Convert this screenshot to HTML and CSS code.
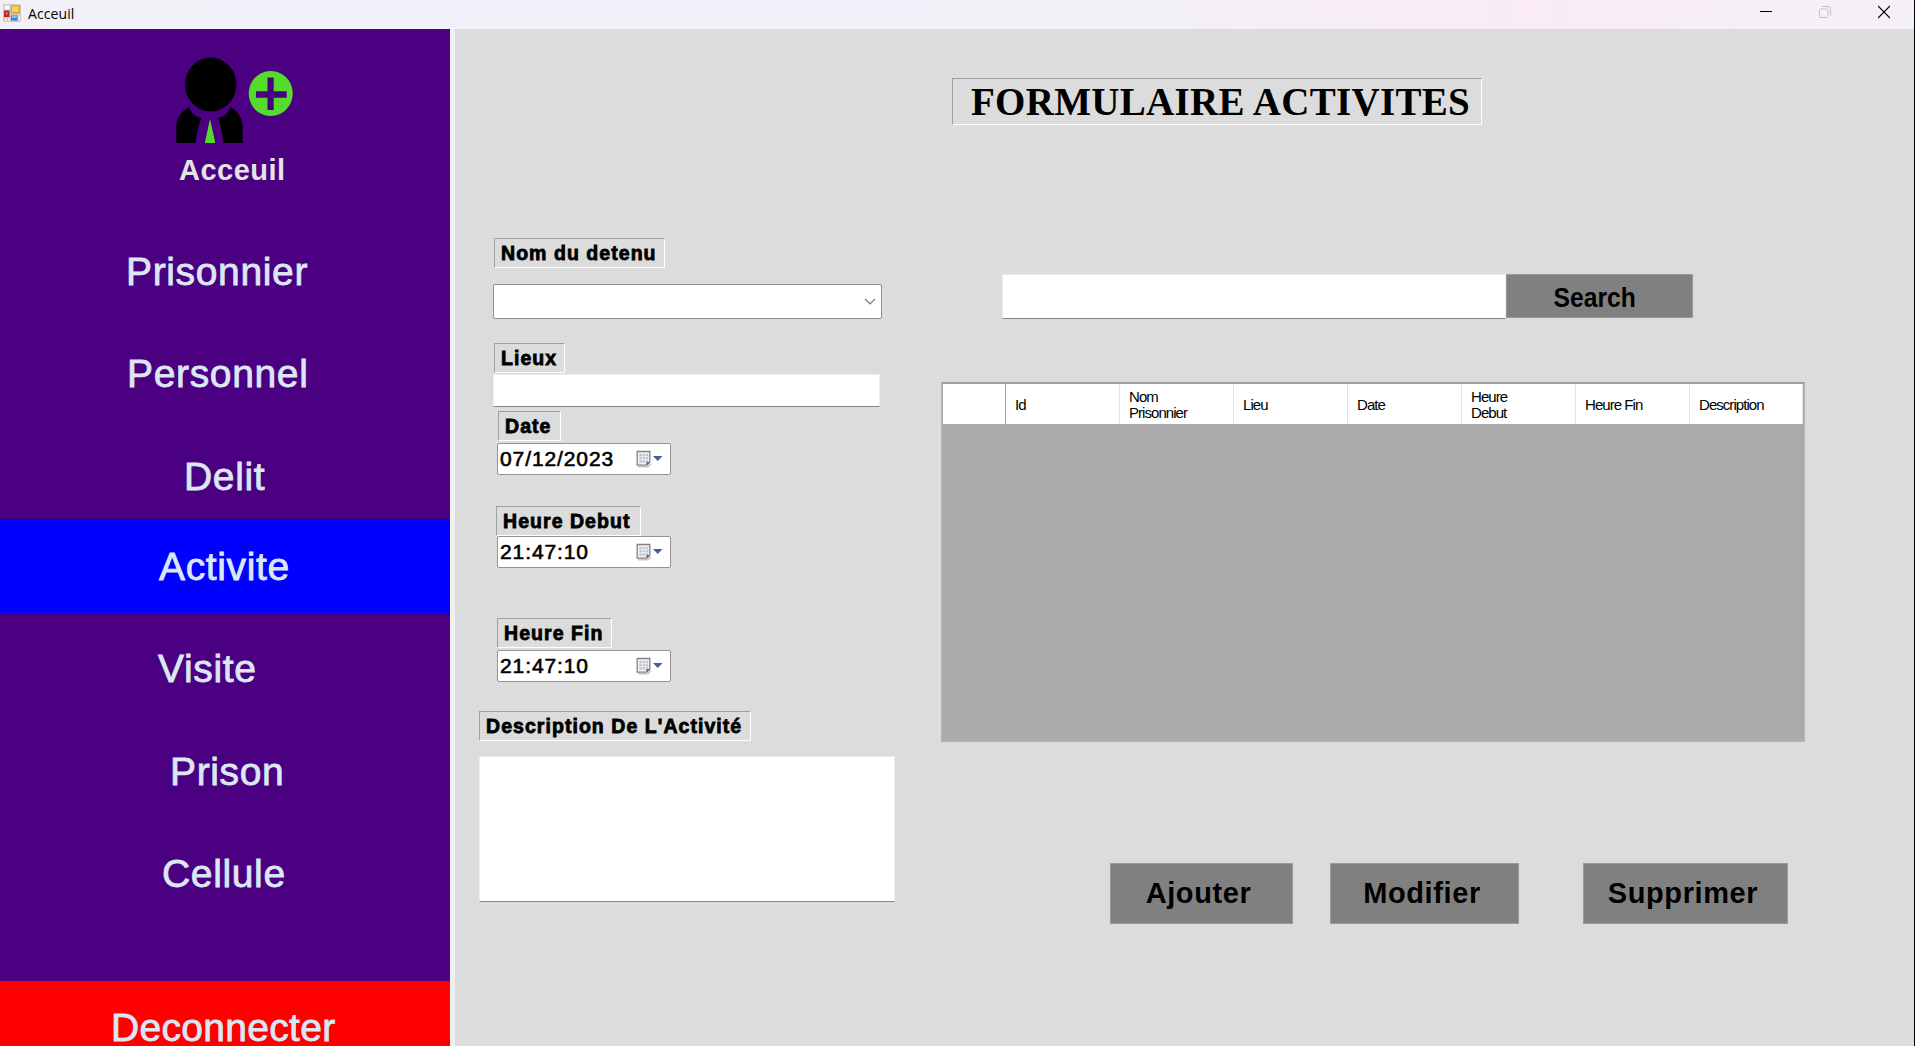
FILE: index.html
```html
<!DOCTYPE html>
<html lang="fr">
<head>
<meta charset="utf-8">
<title>Acceuil</title>
<link rel="stylesheet" href="styles.css">
</head>
<body>
<svg width="0" height="0" class="defs">
  <symbol id="calendar" viewBox="0 0 27 18">
    <path d="M2 16.700h10l3-3" stroke="#c9c6c6" stroke-width="1.500" fill="none"/>
    <path d="M1.200 1.500h12.600v10.700l-3 3h-9.600z" fill="#eef0f3" stroke="#8b8080" stroke-width="1.300"/>
    <path d="M3.500 4h8.500v8.500h-8.500z" fill="#b9c3d2"/>
    <path d="M3.500 6.700h8.500M3.500 9.700h8.500M6.200 4v8.500M9.200 4v8.500" stroke="#f7f9fb" stroke-width=".8"/>
    <path d="M10.500 15.500v-3.500h3.500z" fill="#6d6464"/>
    <path d="M17 6h9.500l-4.750 5z" fill="#465f92"/>
  </symbol>
</svg>
<header class="titlebar">
  <svg class="app-icon" width="18" height="18" viewBox="0 0 18 18">
    <rect width="18" height="18" rx="1" fill="#c9c9ce"/>
    <rect x="1.500" y="1.500" width="5" height="4" fill="#f7f7f9"/>
    <rect x="1" y="6.500" width="5.500" height="6.500" fill="#b72c22"/>
    <rect x="3" y="8.500" width="1.500" height="2" fill="#ee9b8c"/>
    <rect x="8" y="1.500" width="9" height="8" fill="#e0a413"/>
    <rect x="9" y="2.500" width="6.500" height="5.500" fill="#fbd55a"/>
    <rect x="8" y="11.500" width="6.500" height="5" fill="#3f7fdc"/>
    <rect x="9" y="12" width="4.500" height="2" fill="#8fbcf5"/>
    <path d="M2 14h1.500v3H2zM5 14h1.500v3H5zM15.500 11.500h1.500v5h-1.500z" fill="#f4f4f6"/>
  </svg>
  <span class="window-title">Acceuil</span>
  <div class="window-controls">
    <svg width="12" height="14" viewBox="0 0 12 14"><path d="M0 6.500h12" stroke="#000"/></svg>
    <svg width="12" height="14" viewBox="0 0 12 14" fill="none" stroke="#c3bec5"><rect x=".5" y="4" width="8.500" height="8.500" rx="1.500"/><path d="M3 1.500h6q2.500 0 2.500 2.500v6.500"/></svg>
    <svg width="12" height="14" viewBox="0 0 12 14"><path d="M0 1l12 12M12 1L0 13" stroke="#000" stroke-width="1.200"/></svg>
  </div>
</header>
<div class="window">
  <nav class="sidebar">
    <div class="brand">
      <svg width="118" height="87" viewBox="0 0 118 87">
        <ellipse cx="34.700" cy="27.500" rx="25.700" ry="27"/>
        <path d="M13 50Q16 59 25.500 61Q21 72 19.500 86H.3V68Q1 57 13 50z"/>
        <path d="M54.500 50Q51 59 42 61Q46 72 47.500 86H66.500V68Q66 57 54.500 50z"/>
        <path d="M34 62L39.300 86H28.800z" fill="#54dc2c"/>
        <path fill-rule="evenodd" fill="#54dc2c" d="M94.700 14a22 22.500 0 1 0 .01 0zM91.500 20.500h6.200v13.700H110.700v6.500H97.700V53H91.500V40.700H80v-6.500H91.500z"/>
      </svg>
      <span class="brand-name">Acceuil</span>
    </div>
    <a class="item prisonnier">Prisonnier</a>
    <a class="item personnel">Personnel</a>
    <a class="item delit">Delit</a>
    <a class="item activite">Activite</a>
    <a class="item visite">Visite</a>
    <a class="item prison">Prison</a>
    <a class="item cellule">Cellule</a>
    <a class="item deconnecter">Deconnecter</a>
  </nav>
  <main class="content">
    <section class="form">
      <label class="label nom">Nom du detenu</label>
      <div class="select"><svg width="12" height="8" viewBox="0 0 12 8"><path d="M1 1l5 5 5-5" fill="none" stroke="#777" stroke-width="1.200"/></svg></div>
      <label class="label lieux">Lieux</label>
      <div class="textbox lieux-box"></div>
      <label class="label date">Date</label>
      <div class="picker"><span>07/12/2023</span><svg width="27" height="18"><use href="#calendar"/></svg></div>
      <label class="label debut">Heure Debut</label>
      <div class="picker"><span>21:47:10</span><svg width="27" height="18"><use href="#calendar"/></svg></div>
      <label class="label fin">Heure Fin</label>
      <div class="picker"><span>21:47:10</span><svg width="27" height="18"><use href="#calendar"/></svg></div>
      <label class="label description">Description De L'Activité</label>
      <div class="textbox description-box"></div>
    </section>
    <section class="list">
      <h1 class="heading">FORMULAIRE ACTIVITES</h1>
      <div class="search">
        <div class="textbox search-box"></div>
        <div class="button search-button"><span>Search</span></div>
      </div>
      <div class="grid">
        <div class="grid-head">
          <div class="corner"></div>
          <div>Id</div>
          <div>Nom<br>Prisonnier</div>
          <div>Lieu</div>
          <div>Date</div>
          <div>Heure<br>Debut</div>
          <div>Heure Fin</div>
          <div>Description</div>
        </div>
      </div>
      <div class="actions">
        <div class="button ajouter">Ajouter</div>
        <div class="button modifier">Modifier</div>
        <div class="button supprimer">Supprimer</div>
      </div>
    </section>
  </main>
</div>
</body>
</html>
```
FILE: styles.css
```css
* { box-sizing: border-box; }
body {
  margin: 0;
  height: 1046px;
  overflow: hidden;
  display: flex;
  flex-direction: column;
  background: #dcdcdc;
  color: #000;
  font-family: "Liberation Sans", Arial, sans-serif;
}
svg { display: block; flex: none; }
.defs { position: absolute; }

.titlebar {
  flex: none;
  height: 29px;
  display: flex;
  align-items: flex-start;
  padding: 4px 24px 0 3px;
  background: linear-gradient(90deg, #f2f1f8 0%, #f3f0f8 60%, #faebf4 80%, #f6eff7 92%, #f5f0f7 100%);
  border-right: 1px solid #000;
}
.window-title {
  margin-left: 7px;
  font: 14px/19px "Open Sans", "Noto Sans", sans-serif;
  letter-spacing: .1px;
}
.window-controls {
  margin-left: auto;
  display: flex;
  gap: 47px;
  padding-top: 1px;
}

.window {
  flex: 1;
  min-height: 0;
  display: flex;
  border-right: 1px solid #000;
}
.sidebar {
  flex: none;
  width: 455px;
  display: flex;
  flex-direction: column;
  background: #4b0082;
  border-right: 5px solid #f0f0f0;
}
.brand {
  flex: none;
  height: 192px;
  padding: 28px 0 0 176px;
}
.brand-name {
  display: block;
  margin: 9px 0 0 3px;
  font-size: 29px;
  font-weight: bold;
  line-height: 34px;
  letter-spacing: .5px;
  color: #e4e4e4;
}
.item {
  flex: none;
  height: 102px;
  display: flex;
  align-items: center;
  font-size: 39px;
  letter-spacing: .65px;
  color: #dbe8f4;
  -webkit-text-stroke: .8px #dbe8f4;
}
.prisonnier { padding-left: 126px; }
.personnel { padding-left: 127px; }
.delit { height: 94px; padding: 9px 0 0 184px; }
.activite { height: 95px; padding-left: 159px; background: #00f; }
.visite { height: 110px; padding-left: 158px; }
.prison { height: 96px; padding-left: 170px; }
.cellule { height: 108px; padding-left: 162px; }
.deconnecter { height: 94px; margin-top: 53px; padding-left: 111px; letter-spacing: .3px; background: #f00; }

.content {
  flex: 1;
  display: flex;
  align-items: flex-start;
}
.form {
  flex: none;
  width: 486px;
  padding: 209px 0 0 24px;
  display: flex;
  flex-direction: column;
  align-items: flex-start;
}
.label {
  height: 30px;
  padding-left: 6px;
  border: 1px solid;
  border-color: #a0a0a0 #fff #fff #a0a0a0;
  font-size: 19.5px;
  font-weight: bold;
  line-height: 29px;
  letter-spacing: 1.05px;
  white-space: nowrap;
  -webkit-text-stroke: .8px #000;
}
.nom { width: 171px; margin-left: 15px; }
.lieux { width: 71px; margin: 24px 0 0 15px; }
.date { width: 63px; margin: 4px 0 0 19px; }
.debut { width: 145px; margin: 31px 0 0 17px; }
.fin { width: 115px; margin: 50px 0 0 18px; }
.description { width: 272px; margin-top: 29px; }
.select {
  width: 389px;
  height: 35px;
  margin: 16px 0 0 14px;
  padding-right: 5px;
  display: flex;
  align-items: center;
  justify-content: flex-end;
  background: #fff;
  border: 1px solid #8f8f8f;
  border-radius: 2px;
}
.textbox {
  background: #fff;
  border: 1px solid #ececec;
  border-bottom-color: #868686;
}
.lieux-box { width: 387px; height: 33px; margin: 1px 0 0 14px; }
.description-box { width: 416px; height: 146px; margin-top: 15px; }
.picker {
  width: 174px;
  height: 32px;
  margin: 2px 0 0 18px;
  padding: 0 7px 0 2px;
  display: flex;
  align-items: center;
  justify-content: space-between;
  background: #fff;
  border: 1px solid #959595;
  border-radius: 2px;
  font-size: 21px;
  letter-spacing: .9px;
  -webkit-text-stroke: .6px #000;
}
.debut + .picker { margin-top: 0; }

.list {
  flex: none;
  width: 864px;
  padding-top: 49px;
}
.heading {
  width: 530px;
  height: 47px;
  margin: 0 0 0 11px;
  padding-left: 18px;
  border: 1px solid;
  border-color: #a0a0a0 #fff #fff #a0a0a0;
  font: bold 39px/46px "Liberation Serif", "Times New Roman", serif;
  letter-spacing: .3px;
  white-space: nowrap;
}
.search {
  display: flex;
  align-items: flex-start;
  margin: 149px 0 0 61px;
}
.search-box { width: 504px; height: 45px; }
.button {
  display: flex;
  align-items: center;
  justify-content: center;
  background: #808080;
  border: 1px solid #9a9a9a;
  font-size: 29px;
  font-weight: bold;
  letter-spacing: .6px;
}
.search-button {
  width: 187px;
  height: 44px;
  padding-right: 9px;
  font-size: 28px;
  letter-spacing: 0;
}
.search-button span {
  transform: scaleX(.88);
  padding-top: 3px;
}
.grid {
  height: 360px;
  margin-top: 63px;
  background: #ababab;
  border: 1px solid #b4b4b8;
  border-top: 2px solid #a0a0a3;
}
.grid-head {
  height: 40px;
  margin: 0 1px;
  display: grid;
  grid-template-columns: 63px 114px 114px 114px 114px 114px 114px 1fr;
  background: #fff;
  font-size: 15px;
  line-height: 16px;
  letter-spacing: -.95px;
}
.grid-head div {
  display: flex;
  align-items: center;
  padding: 1px 0 0 9px;
  border-right: 1px solid #e5e5e5;
}
.grid-head .corner { border-right-color: #a0a0a0; }
.actions {
  display: flex;
  margin: 121px 0 0 169px;
}
.actions .button { height: 61px; }
.ajouter { width: 183px; padding-right: 6px; }
.modifier { width: 189px; margin-left: 37px; padding-right: 5px; }
.supprimer { width: 205px; margin-left: 64px; padding-right: 5px; }
```
